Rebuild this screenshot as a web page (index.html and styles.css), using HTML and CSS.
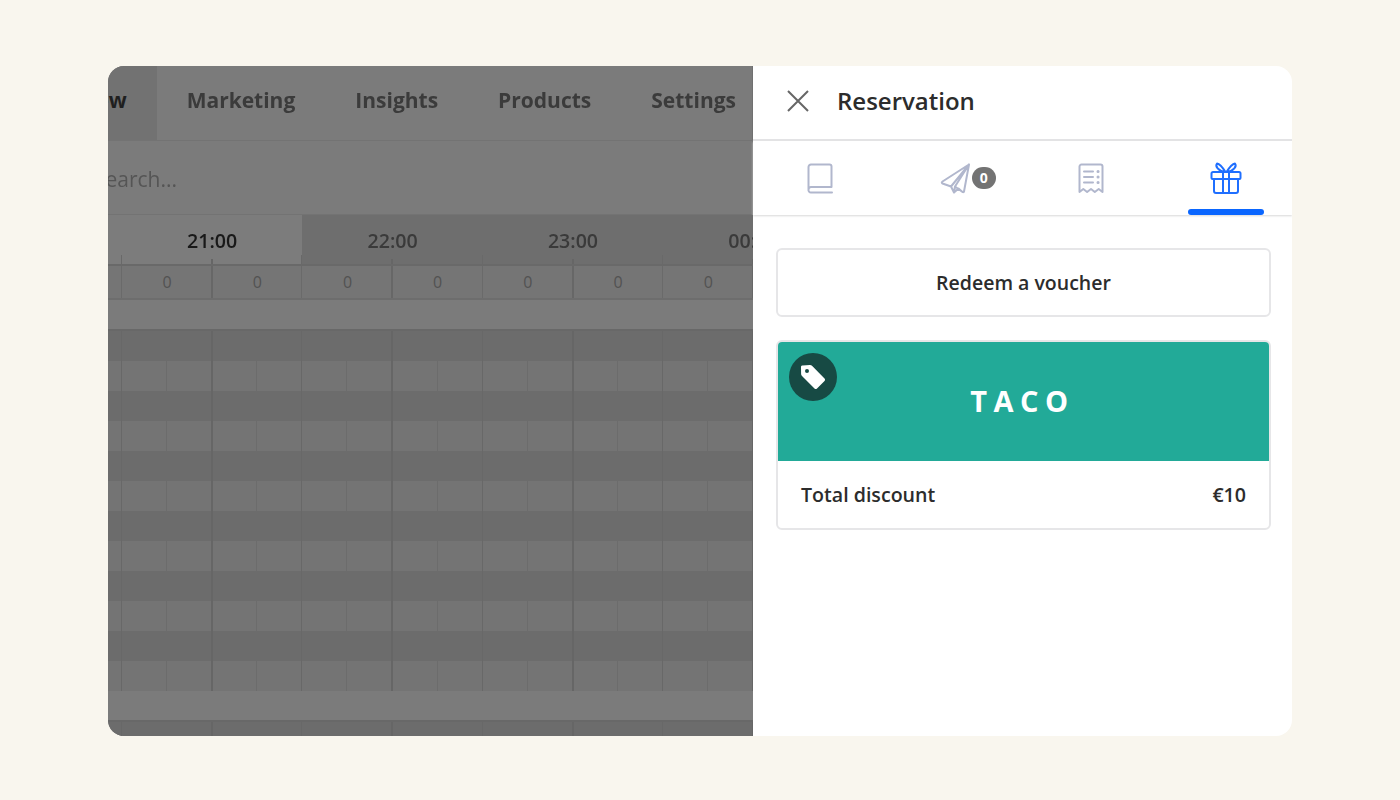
FILE: index.html
```html
<!DOCTYPE html>
<html lang="en">
<head>
<meta charset="utf-8">
<title>Reservation</title>
<link rel="stylesheet" href="styles.css">
</head>
<body>
<main class="frame">
  <section class="app">
    <nav class="nav">
      <a class="nav-item active">Overview</a>
      <a class="nav-item">Marketing</a>
      <a class="nav-item">Insights</a>
      <a class="nav-item">Products</a>
      <a class="nav-item">Settings</a>
    </nav>
    <div class="search"><span class="search-text">Search...</span></div>
    <div class="hours">
      <div class="hour current"></div>
      <div class="hour current strong">21:00</div>
      <div class="hour">22:00</div>
      <div class="hour">23:00</div>
      <div class="hour">00:00</div>
    </div>
    <div class="counts">
      <span class="count">0</span><span class="count">0</span><span class="count">0</span><span class="count">0</span><span class="count">0</span><span class="count">0</span><span class="count">0</span>
    </div>
    <div class="band"></div>
    <div class="slots">
      <div class="slot"></div><div class="slot"></div><div class="slot"></div><div class="slot"></div>
      <div class="slot"></div><div class="slot"></div><div class="slot"></div><div class="slot"></div>
      <div class="slot"></div><div class="slot"></div><div class="slot"></div><div class="slot"></div>
    </div>
    <div class="band"></div>
    <div class="slot tail"></div>
  </section>

  <aside class="panel">
    <header class="panel-head">
      <svg class="close" width="24" height="24" viewBox="0 0 24 24" aria-hidden="true"><path d="M2 2 L22 22 M22 2 L2 22"/></svg>
      <h1 class="panel-title">Reservation</h1>
    </header>
    <div class="tabs">
      <div class="tab">
        <svg class="icon" width="26" height="31" viewBox="0 0 26 31" aria-hidden="true"><path d="M1.500 26.500V4a2.500 2.500 0 0 1 2.500-2.500H22.500a2 2 0 0 1 2 2V24H4a2.500 2.500 0 0 0-2.500 2.500A2.500 2.500 0 0 0 4 29.500H25"/></svg>
      </div>
      <div class="tab">
        <svg class="icon" width="31" height="31" viewBox="0 0 31 31" aria-hidden="true"><path d="M29 1.500 2.500 18.500c-1 .7-1 1.500 0 2L11 23.500l3 6 4.500-4 4 3.500c.8.500 1.200.200 1.500-.5L29 1.500ZM29 1.500 11 23.500M14 29.500l1-6L29 1.500M15 23.500l7.500 5.500"/></svg>
        <span class="badge">0</span>
      </div>
      <div class="tab">
        <svg class="icon receipt" width="26" height="31" viewBox="0 0 26 31" aria-hidden="true"><path d="M1.500 29V3.500a2 2 0 0 1 2-2h19a2 2 0 0 1 2 2V29l-3.800-3-3.900 3-3.800-3-3.900 3-3.800-3Z"/><path d="M6 8.500h9M6 14h9M6 19.500h9"/><path class="dots" d="M20 8.500h.1M20 14h.1M20 19.500h.1"/></svg>
      </div>
      <div class="tab selected">
        <svg class="icon blue" width="32" height="32" viewBox="0 0 32 32" aria-hidden="true"><path d="M3 10H29a1.500 1.500 0 0 1 1.500 1.500V16a1 1 0 0 1-1 1H2.500a1 1 0 0 1-1-1V11.500A1.500 1.500 0 0 1 3 10Z"/><path d="M4 17V29a2 2 0 0 0 2 2H26a2 2 0 0 0 2-2V17"/><path d="M13 10V31M19 10V31"/><path d="M15.500 10C13 6 10 2 7 1.500 5 4 8 9 15.500 10ZM16.500 10C19 6 22 2 25 1.500 27 4 24 9 16.500 10Z"/></svg>
      </div>
    </div>
    <div class="panel-body">
      <button class="redeem" type="button">Redeem a voucher</button>
      <article class="voucher">
        <div class="voucher-top">
          <span class="tag-badge">
            <svg width="26" height="26" viewBox="0 0 26 26" aria-hidden="true"><path fill-rule="evenodd" d="M2.500 1.500 10 1c.8 0 1.500.3 2 .8L24.500 14.500c.7.7.7 1.800 0 2.500L17 24.500c-.7.700-1.800.700-2.500 0L2 12c-.6-.6-.9-1.300-.9-2L1 3c0-1 .6-1.500 1.500-1.500ZM7 5a2 2 0 1 0 0 4 2 2 0 0 0 0-4Z"/></svg>
          </span>
          <span class="code">TACO</span>
        </div>
        <div class="voucher-foot"><span>Total discount</span><span>€10</span></div>
      </article>
    </div>
  </aside>
</main>
</body>
</html>
```
FILE: styles.css
```css
* { box-sizing: border-box; }
html, body { margin: 0; height: 100%; }
body {
  background: #f9f6ee;
  font-family: "Open Sans", "Liberation Sans", sans-serif;
  display: flex;
  align-items: flex-start;
  justify-content: center;
  padding-top: 66px;
}
.frame {
  width: 1184px;
  height: 670px;
  display: flex;
  border-radius: 16px;
  overflow: hidden;
}
.app {
  width: 645px;
  flex: none;
  overflow: hidden;
  background: #7b7b7b;
  box-shadow: inset -1px 0 0 #707070;
}
.nav {
  height: 75px;
  display: flex;
  justify-content: flex-end;
  border-bottom: 1px solid #737373;
  overflow: hidden;
}
.nav-item {
  flex: none;
  padding: 0 30px;
  line-height: 68px;
  font-size: 21px;
  font-weight: 700;
  color: #3b3b3b;
  filter: blur(.35px);
}
.nav-item:last-child { margin-right: -13px; }
.nav-item.active { background: #727272; color: #1f1f1f; filter: none; }
.search {
  height: 74px;
  display: flex;
  align-items: center;
  overflow: hidden;
  border-bottom: 1px solid #737373;
}
.search-text {
  margin-left: -14px;
  margin-top: 2px;
  font-size: 21px;
  color: #555;
  filter: blur(.35px);
}
.hours {
  position: relative;
  height: 51px;
  display: flex;
  margin-left: -166.400px;
  border-bottom: 2px solid #696969;
}
.hours::after {
  content: "";
  position: absolute;
  left: 166.400px;
  right: 0;
  bottom: 0;
  height: 9px;
  background-image:
    repeating-linear-gradient(90deg, #0000 0 103px, #666 103px 105px, #0000 105px 180.400px),
    repeating-linear-gradient(90deg, #0000 0 13px, #696969 13px 14px, #0000 14px 180.400px);
  background-size: 100% 5px, 100% 9px;
  background-position: 0 100%, 0 100%;
  background-repeat: no-repeat;
}
.hour {
  flex: none;
  width: 180.400px;
  background: #6e6e6e;
  color: #3a3a3a;
  font-size: 19.600px;
  font-weight: 600;
  line-height: 52px;
  text-align: center;
  filter: blur(.3px);
}
.hour.current { background: #7c7c7c; }
.hour.strong { color: #191919; }
.counts {
  height: 34px;
  display: flex;
  padding-left: 14px;
  border-bottom: 2px solid #6d6d6d;
  background-color: #757575;
  background-image:
    repeating-linear-gradient(90deg, #0000 0 103px, #676767 103px 105px, #0000 105px 180.400px),
    repeating-linear-gradient(90deg, #0000 0 13px, #6a6a6a 13px 14px, #0000 14px 180.400px);
}
.count {
  flex: none;
  width: 90.200px;
  text-align: center;
  font-size: 16px;
  line-height: 33px;
  color: #525252;
}
.band {
  height: 31px;
  background: #7b7b7b;
  border-bottom: 2px solid #686868;
}
.slots { display: flex; flex-direction: column; }
.slot {
  height: 30px;
  background-color: #6c6c6c;
  background-image:
    repeating-linear-gradient(90deg, #0000 0 103px, #666 103px 105px, #0000 105px 180.400px),
    repeating-linear-gradient(90deg, #0000 0 13px, #686868 13px 14px, #0000 14px 180.400px),
    repeating-linear-gradient(90deg, #0000 0 58px, #6c6c6c 58px 59px, #0000 59px 90.200px);
}
.slot:nth-child(even) { background-color: #747474; }
.slot.tail { height: 15px; background-color: #6c6c6c; }

.panel {
  flex: 1;
  background: #fff;
  min-width: 0;
}
.panel-head {
  height: 75px;
  display: flex;
  align-items: center;
  gap: 27px;
  padding: 0 0 3px 33px;
  border-bottom: 2px solid #e3e3e5;
}
.close { fill: none; stroke: #666; stroke-width: 2; flex: none; }
.panel-title {
  margin: 0;
  font-size: 24px;
  font-weight: 600;
  color: #2c2c2c;
  line-height: 40px;
}
.tabs {
  height: 74px;
  display: grid;
  grid-template-columns: repeat(4, 1fr);
  box-shadow: 0 1px 2px #d8d8d8;
}
.tab {
  position: relative;
  display: flex;
  align-items: center;
  justify-content: center;
}
.icon { fill: none; stroke: #b1b7cd; stroke-width: 2; stroke-linecap: round; stroke-linejoin: round; }
.icon .dots { stroke-width: 3; }
.icon.receipt { margin-left: 2px; }
.icon.blue { stroke: #1f6fff; margin-left: 2px; }
.selected::after {
  content: "";
  position: absolute;
  left: 31px;
  right: 28px;
  bottom: 0;
  height: 6px;
  border-radius: 3px;
  background: #0a66ff;
}
.badge {
  position: absolute;
  left: 84px;
  top: 26px;
  width: 24px;
  height: 22px;
  border-radius: 11px;
  background: #737373;
  color: #fff;
  font-size: 14px;
  font-weight: 700;
  line-height: 22px;
  text-align: center;
}
.panel-body {
  padding: 33px 21px 0 23px;
  display: flex;
  flex-direction: column;
  gap: 23px;
}
.redeem {
  height: 69px;
  border: 2px solid #e6e6e8;
  border-radius: 6px;
  background: #fff;
  font-family: inherit;
  font-size: 19.500px;
  font-weight: 600;
  color: #2c2c2c;
}
.voucher {
  border: 2px solid #e6e6e8;
  border-radius: 6px;
  overflow: hidden;
}
.voucher-top {
  position: relative;
  height: 120px;
  margin: -1px -1px 0;
  background: #22aa98;
  display: flex;
  align-items: center;
  justify-content: center;
}
.tag-badge {
  position: absolute;
  left: 12px;
  top: 12px;
  width: 48px;
  height: 48px;
  border-radius: 50%;
  background: #174a44;
  display: flex;
  align-items: center;
  justify-content: center;
}
.tag-badge svg { fill: #fff; }
.code {
  font-size: 29px;
  font-weight: 700;
  letter-spacing: 6.500px;
  color: #fff;
  margin: -2px 0 0 -2px;
}
.voucher-foot {
  height: 67px;
  display: flex;
  align-items: center;
  justify-content: space-between;
  padding: 0 23px;
  font-size: 19.600px;
  font-weight: 600;
  color: #2c2c2c;
}
```
